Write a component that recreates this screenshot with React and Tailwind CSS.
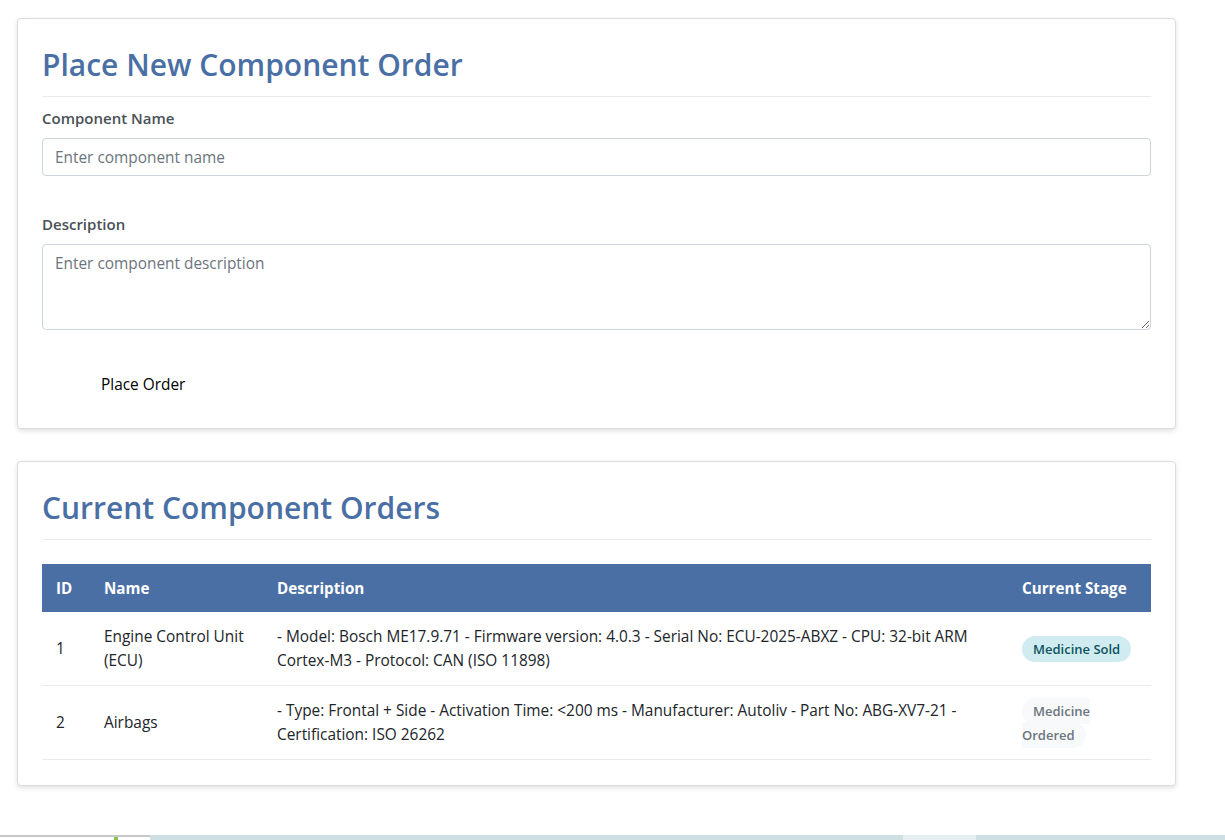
const orders = [
  {
    id: 1,
    name: 'Engine Control Unit (ECU)',
    description:
      '- Model: Bosch ME17.9.71 - Firmware version: 4.0.3 - Serial No: ECU-2025-ABXZ - CPU: 32-bit ARM Cortex-M3 - Protocol: CAN (ISO 11898)',
    stage: 'Medicine Sold',
    badge: 'bg-[#d1ecf1] text-[#0c5460]',
  },
  {
    id: 2,
    name: 'Airbags',
    description:
      '- Type: Frontal + Side - Activation Time: <200 ms - Manufacturer: Autoliv - Part No: ABG-XV7-21 - Certification: ISO 26262',
    stage: 'Medicine Ordered',
    badge: 'bg-[#f8f9fa] text-[#6c757d]',
  },
]

function Card({ title, children, className = '' }) {
  return (
    <section className={`bg-white border border-[#dcdcdc] rounded-[4px] shadow-[0_2px_5px_rgba(0,0,0,0.12)] px-6 ${className}`}>
      <h2 className="pt-[28px] pb-[13px] border-b border-[#e9ecef] text-[30px] leading-[36px] font-semibold text-[#4a6fa5]">
        {title}
      </h2>
      {children}
    </section>
  )
}

export default function App() {
  return (
    <div className="bg-white min-h-[840px] text-[#212529] font-['Open_Sans',sans-serif] text-[15.4px]">
      <div className="w-[1159px] ml-[17px] pt-[18px]">
        <Card title="Place New Component Order" className="pb-[19px]">
          <form className="pt-[9px]" onSubmit={e => e.preventDefault()}>
            <label className="block text-[15px] leading-6 font-semibold text-[#495057] mb-2">Component Name</label>
            <input
              type="text"
              placeholder="Enter component name"
              className="block w-full h-[38px] px-3 pt-[1px] border border-[#ced4da] rounded-[4px] text-[15.4px] placeholder:text-[#6c757d] outline-none"
            />
            <label className="block mt-9 text-[15px] leading-6 font-semibold text-[#495057] mb-2">Description</label>
            <textarea
              rows={3}
              placeholder="Enter component description"
              className="block w-full h-[86px] px-3 py-[7px] border border-[#ced4da] rounded-[4px] text-[15.4px] leading-6 placeholder:text-[#6c757d] outline-none"
            />
            <button type="submit" className="mt-[31px] px-[59px] py-3 text-[15.4px] leading-6 text-black">
              Place Order
            </button>
          </form>
        </Card>

        <Card title="Current Component Orders" className="mt-8 pb-[25px]">
          <table className="w-full mt-6 border-collapse table-fixed text-left">
            <colgroup>
              <col className="w-[48px]" />
              <col className="w-[173px]" />
              <col className="w-[745px]" />
              <col />
            </colgroup>
            <thead>
              <tr className="bg-[#4a6fa5] text-white">
                <th className="px-[14px] py-3 leading-6 font-bold text-[15.2px]">ID</th>
                <th className="px-[14px] py-3 leading-6 font-bold text-[15.2px]">Name</th>
                <th className="px-[14px] py-3 leading-6 font-bold text-[15.2px]">Description</th>
                <th className="px-[14px] py-3 leading-6 font-bold text-[15.2px]">Current Stage</th>
              </tr>
            </thead>
            <tbody>
              {orders.map(o => (
                <tr key={o.id} className="border-b border-[#e9ecef]">
                  <td className="px-[14px] pt-[13px] pb-3 leading-6 align-middle">{o.id}</td>
                  <td className="px-[14px] pt-[13px] pb-3 leading-6 align-middle">{o.name}</td>
                  <td className="px-[14px] pt-[13px] pb-3 leading-6 align-middle">{o.description}</td>
                  <td className="pl-[14px] pr-3 pt-[13px] pb-3 leading-6 align-middle">
                    <span className={`inline px-[11px] py-[4px] rounded-[14px] text-[13px] font-semibold leading-6 ${o.badge}`}>
                      {o.stage}
                    </span>
                  </td>
                </tr>
              ))}
            </tbody>
          </table>
        </Card>
      </div>

      <div className="mt-[49px] flex h-[6px]">
        <div className="relative w-[150px] border-t-2 border-[#c8c8c8] bg-white">
          <span className="absolute left-[114px] top-0 w-[4px] h-[4px] bg-[#8bc34a]" />
        </div>
        <div className="w-[753px] bg-[#cddfe3]" />
        <div className="w-[73px] bg-[#e6eff1]" />
        <div className="flex-1 bg-[#cddfe3]" />
      </div>
    </div>
  )
}
